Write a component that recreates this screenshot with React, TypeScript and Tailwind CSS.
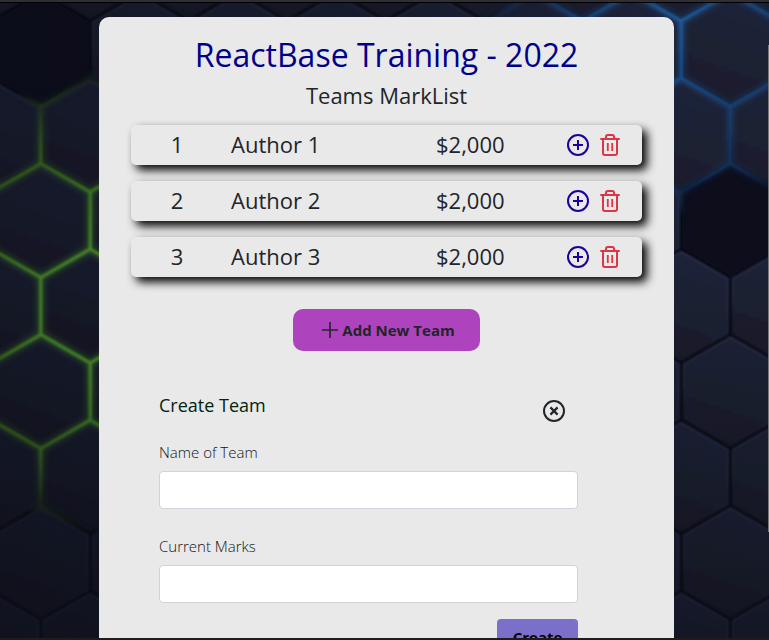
import type { SVGProps } from 'react';

type Point = { x: number; y: number };

const teams = [
  { id: 1, name: 'Author 1', marks: '$2,000' },
  { id: 2, name: 'Author 2', marks: '$2,000' },
  { id: 3, name: 'Author 3', marks: '$2,000' },
];

const HALF_W = 49.2;
const ROW_STEP = 85.5;

function corners(c: Point, inset: number): string {
  const k = 1 - inset / HALF_W;
  const w = HALF_W * k;
  const side = 28.7 * k;
  const tip = 57 * k;
  return [
    [c.x, c.y - tip],
    [c.x + w, c.y - side],
    [c.x + w, c.y + side],
    [c.x, c.y + tip],
    [c.x - w, c.y + side],
    [c.x - w, c.y - side],
  ]
    .map((p) => p.map((v) => v.toFixed(1)).join(','))
    .join(' ');
}

const cells: (Point & { dark: boolean })[] = [];
for (let row = -2; row < 7; row++) {
  for (let col = -1; col < 9; col++) {
    const x = (row % 2 === 0 ? 90 : 41) + col * 98.5;
    const y = 135 + row * ROW_STEP;
    const dark = (row === -1 && col === 0) || (row === 1 && col === 7);
    cells.push({ x, y, dark });
  }
}

function Backdrop() {
  return (
    <svg
      className="col-start-1 row-start-1 h-full w-full"
      viewBox="0 3 769 635"
      preserveAspectRatio="xMidYMid slice"
      aria-hidden="true"
    >
      <defs>
        <linearGradient id="cell" x1="0.6" y1="0" x2="0.3" y2="1">
          <stop offset="0" stopColor="#20233a" />
          <stop offset="1" stopColor="#191e2b" />
        </linearGradient>
        <linearGradient id="rim" x1="0.7" y1="0" x2="0.4" y2="1">
          <stop offset="0" stopColor="#2e3350" />
          <stop offset="0.6" stopColor="#262b40" />
          <stop offset="0.8" stopColor="#171a28" />
        </linearGradient>
        <radialGradient id="green" gradientUnits="userSpaceOnUse" cx="125" cy="300" r="235">
          <stop offset="0" stopColor="#5cb030" />
          <stop offset="0.4" stopColor="#4a9228" />
          <stop offset="0.75" stopColor="#38661f" stopOpacity="0.8" />
          <stop offset="1" stopColor="#2b4a1c" stopOpacity="0" />
        </radialGradient>
        <radialGradient id="blue" gradientUnits="userSpaceOnUse" cx="680" cy="20" r="200">
          <stop offset="0" stopColor="#226fbc" />
          <stop offset="0.4" stopColor="#1b5596" />
          <stop offset="0.75" stopColor="#1a3f72" stopOpacity="0.7" />
          <stop offset="1" stopColor="#183a66" stopOpacity="0" />
        </radialGradient>
        <linearGradient id="shade" x1="0" y1="0" x2="1" y2="0">
          <stop offset="0" stopColor="#0a0b16" stopOpacity="0.4" />
          <stop offset="0.5" stopColor="#0a0b16" stopOpacity="0.3" />
          <stop offset="0.85" stopColor="#0a0b16" stopOpacity="0" />
        </linearGradient>
        <linearGradient id="lower" x1="0" y1="0" x2="0" y2="1">
          <stop offset="0.4" stopColor="#0a0b12" stopOpacity="0" />
          <stop offset="1" stopColor="#0a0b12" stopOpacity="0.45" />
        </linearGradient>
        <filter id="soft" x="-10%" y="-10%" width="120%" height="120%">
          <feGaussianBlur stdDeviation="3" />
        </filter>
        <filter id="edge" x="-10%" y="-10%" width="120%" height="120%">
          <feGaussianBlur stdDeviation="0.8" />
        </filter>
      </defs>
      <rect y="0" width="769" height="640" fill="#080a16" />
      <g filter="url(#edge)" strokeLinejoin="round">
        {cells.map((c) => (
          <polygon
            key={`${c.x}-${c.y}`}
            points={corners(c, 2.4)}
            fill={c.dark ? '#0e111c' : 'url(#cell)'}
            stroke={c.dark ? '#10131f' : 'url(#rim)'}
            strokeWidth="1.6"
          />
        ))}
      </g>
      <rect y="0" width="769" height="640" fill="url(#shade)" />
      <rect y="0" width="769" height="640" fill="url(#lower)" />
      {['url(#green)', 'url(#blue)'].map((paint) => (
        <g key={paint} fill="none" stroke={paint}>
          <g filter="url(#soft)" strokeWidth="7" opacity="0.35">
            {cells.map((c) => (
              <polygon key={`${c.x}-${c.y}`} points={corners(c, 0)} />
            ))}
          </g>
          <g filter="url(#edge)" strokeWidth="3" opacity="0.75">
            {cells.map((c) => (
              <polygon key={`${c.x}-${c.y}`} points={corners(c, 0)} />
            ))}
          </g>
        </g>
      ))}
    </svg>
  );
}

function PlusCircle(props: SVGProps<SVGSVGElement>) {
  return (
    <svg viewBox="0 0 22 22" fill="none" stroke="currentColor" strokeWidth="2" aria-hidden="true" {...props}>
      <circle cx="11" cy="11" r="10" />
      <path d="M11 6v10M6 11h10" />
    </svg>
  );
}

function Trash(props: SVGProps<SVGSVGElement>) {
  return (
    <svg viewBox="0 0 20 22" fill="none" stroke="currentColor" strokeWidth="2" aria-hidden="true" {...props}>
      <path d="M0.3 5h19.4M5.9 5V3.4Q5.9 1 8 1h4Q14.1 1 14.1 3.4V5M3 5v14Q3 21 5 21h10Q17 21 17 19V5" />
      <path d="M7.8 9v8M12.2 9v8" strokeWidth="1.8" />
    </svg>
  );
}

function CloseCircle(props: SVGProps<SVGSVGElement>) {
  return (
    <svg viewBox="0 0 22 22" fill="none" stroke="currentColor" strokeWidth="2" aria-hidden="true" {...props}>
      <circle cx="11" cy="11" r="10" />
      <path d="M7.4 7.4l7.2 7.2M14.6 7.4l-7.2 7.2" strokeWidth="2.2" />
    </svg>
  );
}

function Field({ id, label }: { id: string; label: string }) {
  return (
    <div className="flex flex-col gap-1.5">
      <label htmlFor={id} className="text-[15px] leading-[26px] font-light text-[#101418]">
        {label}
      </label>
      <input
        id={id}
        type="text"
        className="h-[38px] w-full rounded border border-[#ced4da] bg-white px-3 text-base"
      />
    </div>
  );
}

export default function App() {
  return (
    <div className="flex h-screen flex-col overflow-hidden border-b-2 border-[#1f1c1f] bg-[#0b0c16] font-['Open_Sans','Noto_Sans',sans-serif] text-[#212529]">
      <div className="h-[3px] shrink-0 border-b border-black bg-[#2f2e37]" />
      <div className="grid min-h-0 flex-1 grid-cols-[minmax(0,1fr)] grid-rows-[minmax(0,1fr)] overflow-hidden">
        <Backdrop />
        <div className="z-10 col-start-1 row-start-1 mt-[42px] mb-[106px] w-px justify-self-end bg-[#777]" />
        <main className="z-10 col-start-1 row-start-1 pt-[14px] pr-[95px] pl-[99px]">
          <div className="rounded-[10px] bg-[#e9e9e9] px-8 pt-5 pb-10">
            <h1 className="text-center text-[32px] leading-9 text-[#00008b]">ReactBase Training - 2022</h1>
            <h2 className="mt-2 text-center text-[22px] leading-7">Teams MarkList</h2>

            <table className="mt-4 block text-[22px] leading-[38px]">
              <tbody className="flex flex-col gap-4">
                {teams.map((team) => (
                  <tr
                    key={team.id}
                    className="grid h-10 grid-cols-[92px_minmax(0,1fr)_131px_53px] items-start rounded-[5px] bg-[#e9e9e9] pr-[22px] shadow-[5px_5px_10px_#000]"
                  >
                    <td className="text-center">{team.id}</td>
                    <td className="pl-2">{team.name}</td>
                    <td>{team.marks}</td>
                    <td className="flex h-10 items-center justify-between">
                      <button type="button" aria-label="Add marks" className="text-[#1f0099]">
                        <PlusCircle className="block h-[22px] w-[22px]" />
                      </button>
                      <button type="button" aria-label="Delete team" className="text-[#dc3545]">
                        <Trash className="block h-[22px] w-5" />
                      </button>
                    </td>
                  </tr>
                ))}
              </tbody>
            </table>

            <div className="mt-8 flex justify-center">
              <button
                type="button"
                className="flex h-[42px] w-[187px] items-center justify-center gap-1 rounded-[10px] bg-[#ae44bd] pl-1 text-[15px] font-bold"
              >
                <svg className="h-4 w-4" viewBox="0 0 16 16" stroke="currentColor" strokeWidth="1.6" aria-hidden="true">
                  <path d="M8 0v16M0 8h16" />
                </svg>
                Add New Team
              </button>
            </div>

            <form className="mt-10 flex flex-col pr-16 pl-7" onSubmit={(e) => e.preventDefault()}>
              <div className="flex items-start justify-between pr-[13px]">
                <h3 className="text-lg text-[#00240f]">Create Team</h3>
                <button type="button" aria-label="Close" className="mt-[9px]">
                  <CloseCircle className="block h-[22px] w-[22px]" />
                </button>
              </div>
              <div className="mt-[17px] flex flex-col gap-6">
                <Field id="team-name" label="Name of Team" />
                <Field id="team-marks" label="Current Marks" />
              </div>
              <button
                type="submit"
                className="mt-4 h-9 w-[81px] self-end rounded bg-[#7b70c9] text-[15px] leading-5 font-bold text-black"
              >
                Create
              </button>
            </form>
          </div>
        </main>
      </div>
    </div>
  );
}
